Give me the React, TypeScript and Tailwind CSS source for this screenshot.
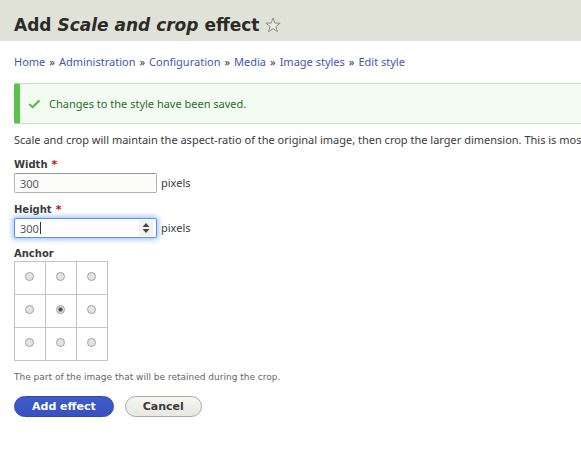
import { useState } from "react";

const breadcrumb = [
  "Home",
  "Administration",
  "Configuration",
  "Media",
  "Image styles",
  "Edit style",
];

const anchors = [
  ["left-top", "center-top", "right-top"],
  ["left-center", "center-center", "right-center"],
  ["left-bottom", "center-bottom", "right-bottom"],
];

interface DimensionFieldProps {
  id: string;
  label: string;
  value: string;
  onChange: (value: string) => void;
  focused?: boolean;
}

function DimensionField({
  id,
  label,
  value,
  onChange,
  focused = false,
}: DimensionFieldProps) {
  return (
    <div>
      <label
        htmlFor={id}
        className="flex h-4 items-center gap-1 font-[DejaVu_Sans,sans-serif] text-[10px] font-bold"
      >
        {label}
        <span className="text-[11px] leading-4 text-[#e00000]">*</span>
      </label>
      <div className="flex items-center gap-1">
        <div className="relative">
          <input
            id={id}
            type="number"
            required
            autoFocus={focused}
            value={value}
            onChange={(e) => onChange(e.target.value)}
            className={`block h-5 w-[143px] appearance-none rounded-xs border px-[5px] text-[11px] text-[#595959] caret-transparent outline-none [-moz-appearance:textfield] [&::-webkit-inner-spin-button]:appearance-none ${
              focused
                ? "border-[#5a92e8] bg-white shadow-[0_0_5px_2px_#a9cbfb]"
                : "border-[#b4b4ae] border-t-[#999993] bg-[#fcfcfa]"
            }`}
          />
          {focused && (
            <>
              {/* Text caret */}
              <span className="pointer-events-none absolute top-1 left-[26px] h-3 w-px bg-[#333333]" />
              {/* Spinner arrows */}
              <svg
                viewBox="0 0 14 16"
                className="pointer-events-none absolute top-0.5 right-1 h-4 w-3.5"
              >
                <rect width="14" height="16" fill="#f1f1f1" />
                <path d="M3.5 7 7 3l3.5 4zM3.5 9h7L7 13z" fill="#444" />
              </svg>
            </>
          )}
        </div>
        <span>pixels</span>
      </div>
    </div>
  );
}

export default function App() {
  const [width, setWidth] = useState("300");
  const [height, setHeight] = useState("300");
  const [anchor, setAnchor] = useState("center-center");

  return (
    <div className="overflow-hidden bg-white font-[Noto_Sans,sans-serif] text-[11px] leading-4 text-[#3b3b3b]">
      {/* Page header */}
      <header className="flex items-center gap-1.5 bg-[#e0e2d8] px-3.5 pt-[15px] pb-1.5">
        <h1 className="font-[DejaVu_Sans,sans-serif] text-[17px] leading-5 font-bold text-[#2b2b27]">
          Add <em>Scale and crop</em> effect
        </h1>
        <button type="button" aria-label="Add to shortcuts">
          <svg viewBox="0 0 16 16" className="h-4 w-4">
            <path
              d="M8 1 9.8 6.1l5.4.1-4.3 3.3 1.6 5.2L8 11.6l-4.5 3.1 1.6-5.2L.8 6.2l5.4-.1z"
              fill="#e9ebe1"
              stroke="#85877e"
              strokeWidth="0.9"
            />
          </svg>
        </button>
      </header>

      <nav aria-label="Breadcrumb" className="px-3.5 pt-[13px]">
        <ol className="flex gap-1 whitespace-nowrap">
          {breadcrumb.map((item, i) => (
            <li key={item} className="flex gap-1">
              {i > 0 && <span>»</span>}
              <a href="#" className="text-[#3f57b5]">
                {item}
              </a>
            </li>
          ))}
        </ol>
      </nav>

      <main className="pt-[13px] pl-3.5">
        <div
          role="status"
          className="flex items-center gap-2 rounded-l-xs border-y border-l-6 border-y-[#bfe4b9] border-l-[#5ac14f] bg-[#f2fcf0] py-3 pl-2 leading-[15px] text-[#2c6b2e]"
        >
          <svg viewBox="0 0 13 10" className="h-2.5 w-[13px]">
            <path
              d="m1.3 5 3.3 3.3L11.5 1.4"
              fill="none"
              stroke="#5cb85a"
              strokeWidth="2.2"
            />
          </svg>
          Changes to the style have been saved.
        </div>

        <p className="mt-2 whitespace-nowrap">
          Scale and crop will maintain the aspect-ratio of the original image,
          then crop the larger dimension. This is most useful for creating
          perfectly square thumbnails without stretching the image.
        </p>

        <form className="mt-[9px]" onSubmit={(e) => e.preventDefault()}>
          <div className="flex flex-col gap-[9px]">
            <DimensionField
              id="width"
              label="Width"
              value={width}
              onChange={setWidth}
            />
            <DimensionField
              id="height"
              label="Height"
              value={height}
              onChange={setHeight}
              focused
            />
          </div>

          <fieldset className="mt-2">
            <legend className="font-[DejaVu_Sans,sans-serif] text-[10px] leading-[15px] font-bold">
              Anchor
            </legend>
            <table className="border-collapse">
              <tbody>
                {anchors.map((row) => (
                  <tr key={row[0]}>
                    {row.map((value) => (
                      <td
                        key={value}
                        className="h-[33px] w-[31px] border border-[#c4c4c4] p-0"
                      >
                        <input
                          type="radio"
                          name="anchor"
                          aria-label={value}
                          value={value}
                          checked={anchor === value}
                          onChange={() => setAnchor(value)}
                          className="mb-1 ml-2.5 block size-[9px] appearance-none rounded-full border border-[#a3a3a3] bg-[#e4e4e4] checked:bg-[radial-gradient(circle,#444_0_1px,#e4e4e4_3px)]"
                        />
                      </td>
                    ))}
                  </tr>
                ))}
              </tbody>
            </table>
          </fieldset>

          <p className="mt-2 font-[DejaVu_Sans,sans-serif] text-[9px] text-[#666666]">
            The part of the image that will be retained during the crop.
          </p>

          <div className="mt-[11px] flex gap-[11px] font-[DejaVu_Sans,sans-serif] text-[11px] font-bold">
            <button
              type="submit"
              className="h-[21px] rounded-full border border-[#2f48b0] bg-linear-to-b from-[#3f5bcb] to-[#3a50be] px-[17px] leading-4 text-white"
            >
              Add effect
            </button>
            <button
              type="button"
              className="h-[21px] rounded-full border border-[#a6a6a6] bg-linear-to-b from-[#f6f6f2] to-[#e8e8e1] px-[17px] leading-4 text-[#3a3a3a]"
            >
              Cancel
            </button>
          </div>
        </form>
      </main>
    </div>
  );
}
